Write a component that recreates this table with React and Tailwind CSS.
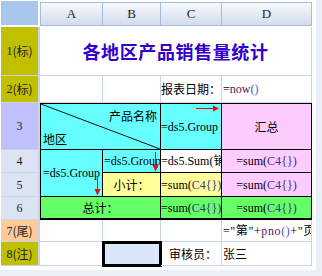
import React from 'react';

const serif = "font-['Liberation_Serif','Noto_Sans_CJK_SC',serif]";
const cjk = "font-['Noto_Sans_CJK_SC','Liberation_Sans',sans-serif]";

// red arrows drawn over the cells
function ArrowRight({ className }) {
     return (
          <svg className={className} width="24" height="7" viewBox="0 0 24 7">
               <line x1="0" y1="3.5" x2="19" y2="3.5" stroke="#ff0000" strokeWidth="1" />
               <path d="M17 0.5 L23 3.5 L17 6.5 Z" fill="#ff0000" />
          </svg>
     );
}

function ArrowDown({ className }) {
     return (
          <svg className={className} width="7" height="20" viewBox="0 0 7 20">
               <line x1="3.5" y1="0" x2="3.5" y2="15" stroke="#ff0000" strokeWidth="1" />
               <path d="M0.5 13 L3.5 19.5 L6.5 13 Z" fill="#ff0000" />
          </svg>
     );
}

function SumFormula() {
     return (
          <>
               <span className="text-black">=sum(</span>
               <span className="text-[#34348a]">C4{'{}'})</span>
          </>
     );
}

const line = 'border-[#c8d5e9]';

export default function App() {
     const headers = ['A', 'B', 'C', 'D'];
     const rowHead = (label, bg, row, extra = '') => (
          <div
               className={`${bg} border-r-2 border-b ${line} flex items-center justify-center text-[12px] text-[#222] ${serif} ${extra}`}
               style={{ gridRow: row }}
          >
               {label}
          </div>
     );

     return (
          <div className="w-[322px] h-[276px] bg-[#ebf0f8]">
               <div className="w-[316px] h-[270px] bg-white pl-px pt-px">
                    <div className="grid grid-cols-[39px_63px_58px_61px_90px] grid-rows-[26px_49px_27px_47px_23px_24px_23px_22px_24px]">
                         {/* column headers */}
                         <div className="bg-[#a8c7ec] border-r-2 border-b-2 border-white" />
                         {headers.map((h, i) => (
                              <div
                                   key={h}
                                   className={`mt-px mb-px border-y border-r ${i === 0 ? 'border-l' : ''} border-[#a3bde0] bg-gradient-to-b from-[#f7f9fc] to-[#d3dcea] flex items-center justify-center text-[13px] text-[#1c1c3c] ${serif}`}
                              >
                                   {h}
                              </div>
                         ))}

                         {/* row 1 */}
                         {rowHead(<>1<span className={cjk}>(标)</span></>, 'bg-[#c0c000]', 2)}
                         <div className={`col-span-4 border-r border-b ${line} flex items-center justify-center text-[18px] font-bold tracking-[0.6px] text-[#3300cc] ${cjk}`}>
                              各地区产品销售量统计
                         </div>

                         {/* row 2 */}
                         {rowHead(<>2<span className={cjk}>(标)</span></>, 'bg-[#c0c000]', 3)}
                         <div className={`border-r border-b ${line}`} />
                         <div className={`border-r border-b ${line}`} />
                         <div className={`border-r border-b ${line} flex items-center justify-end overflow-hidden whitespace-nowrap text-[12px] text-black ${cjk}`}>
                              报表日期：
                         </div>
                         <div className={`border-r border-b ${line} flex items-center pl-px text-[12px] ${serif}`}>
                              <span className="text-black">=</span>
                              <span className="text-[#5a1850]">now</span>
                              <span className="text-[#5454c4]">()</span>
                         </div>

                         {/* row 3 */}
                         {rowHead('3', 'bg-[#c0c0ff]', 4)}
                         <div className="col-span-2 relative bg-[#66ffff] border border-black text-[12px] text-black">
                              <svg className="absolute inset-0 w-full h-full" viewBox="0 0 100 100" preserveAspectRatio="none">
                                   <line x1="0" y1="0" x2="100" y2="100" stroke="#111" strokeWidth="1" vectorEffect="non-scaling-stroke" />
                              </svg>
                              <span className={`absolute right-[3px] top-[3px] ${cjk}`}>产品名称</span>
                              <span className={`absolute left-[2px] bottom-[1px] ${cjk}`}>地区</span>
                         </div>
                         <div className="relative bg-[#66ffff] border-t border-r border-b border-black flex items-center overflow-hidden whitespace-nowrap text-[12px] text-black">
                              <span className={serif}>=ds5.Group</span>
                              <ArrowRight className="absolute right-[1px] top-[1px]" />
                         </div>
                         <div className={`bg-[#ffccff] border-t border-r border-b border-black flex items-center justify-center text-[12px] text-black ${cjk}`}>
                              汇总
                         </div>

                         {/* row 4 */}
                         {rowHead('4', 'bg-[#dce4f4]', 5)}
                         <div className="row-span-2 relative bg-[#66ffff] border-l border-r border-b border-black flex items-center pl-[2px] overflow-hidden whitespace-nowrap text-[12px] text-black">
                              <span className={serif}>=ds5.Group</span>
                              <ArrowDown className="absolute right-[1px] bottom-[0px]" />
                         </div>
                         <div className="relative bg-[#66ffff] border-r border-b border-black flex items-center pl-px overflow-hidden whitespace-nowrap text-[12px] text-black">
                              <span className={serif}>=ds5.Group</span>
                              <ArrowDown className="absolute right-[1px] bottom-[0px]" />
                         </div>
                         <div className={`bg-white border-r border-b border-black flex items-center overflow-hidden whitespace-nowrap text-[12px] text-black ${serif}`}>
                              =ds5.Sum(销售量)
                         </div>
                         <div className={`bg-[#ffccff] border-r border-b border-black flex items-center justify-center whitespace-nowrap text-[12px] ${serif}`}>
                              <SumFormula />
                         </div>

                         {/* row 5 */}
                         {rowHead('5', 'bg-[#dce4f4]', 6)}
                         <div className={`bg-[#ffff99] border-r border-b border-black flex items-center justify-center text-[12px] text-black ${cjk}`}>
                              小计：
                         </div>
                         <div className={`bg-[#ffff99] border-r border-b border-black flex items-center overflow-hidden whitespace-nowrap text-[12px] ${serif}`}>
                              <SumFormula />
                         </div>
                         <div className={`bg-[#ffccff] border-r border-b border-black flex items-center justify-center whitespace-nowrap text-[12px] ${serif}`}>
                              <SumFormula />
                         </div>

                         {/* row 6 */}
                         {rowHead('6', 'bg-[#dce4f4]', 7)}
                         <div className={`col-span-2 bg-[#66ff66] border-l border-r border-b-2 border-black flex items-center justify-center text-[12px] text-black ${cjk}`}>
                              总计：
                         </div>
                         <div className={`bg-[#66ff66] border-r border-b-2 border-black flex items-center overflow-hidden whitespace-nowrap text-[12px] ${serif}`}>
                              <SumFormula />
                         </div>
                         <div className={`bg-[#66ff66] border-r border-b-2 border-black flex items-center justify-center whitespace-nowrap text-[12px] ${serif}`}>
                              <SumFormula />
                         </div>

                         {/* row 7 */}
                         {rowHead(<>7<span className={cjk}>(尾)</span></>, 'bg-[#ffcc99]', 8, 'text-[#3a2a2a]')}
                         <div className={`border-r border-b ${line}`} />
                         <div className={`border-r border-b ${line}`} />
                         <div className={`border-r border-b ${line}`} />
                         <div className={`border-r border-b ${line} flex items-center pl-px overflow-hidden whitespace-nowrap tracking-[0.6px] text-[12px] ${serif}`}>
                              <span className="text-black">="第"+</span>
                              <span className="text-[#5a1850]">pno</span>
                              <span className="text-[#5454c4]">()</span>
                              <span className="text-black">+"页"</span>
                         </div>

                         {/* row 8 */}
                         {rowHead(<>8<span className={cjk}>(注)</span></>, 'bg-[#c0c000]', 9, 'text-[#2a2a10]')}
                         <div className={`border-r border-b ${line}`} />
                         <div className="bg-[#dae6fa] border-2 border-black outline outline-1 outline-black" />
                         <div className={`border-r border-b ${line} flex items-center justify-end pr-[4px] text-[12px] text-black ${cjk}`}>
                              审核员：
                         </div>
                         <div className={`border-r border-b ${line} flex items-center pl-px text-[12px] text-black ${cjk}`}>
                              张三
                         </div>
                    </div>
               </div>
          </div>
     );
}
